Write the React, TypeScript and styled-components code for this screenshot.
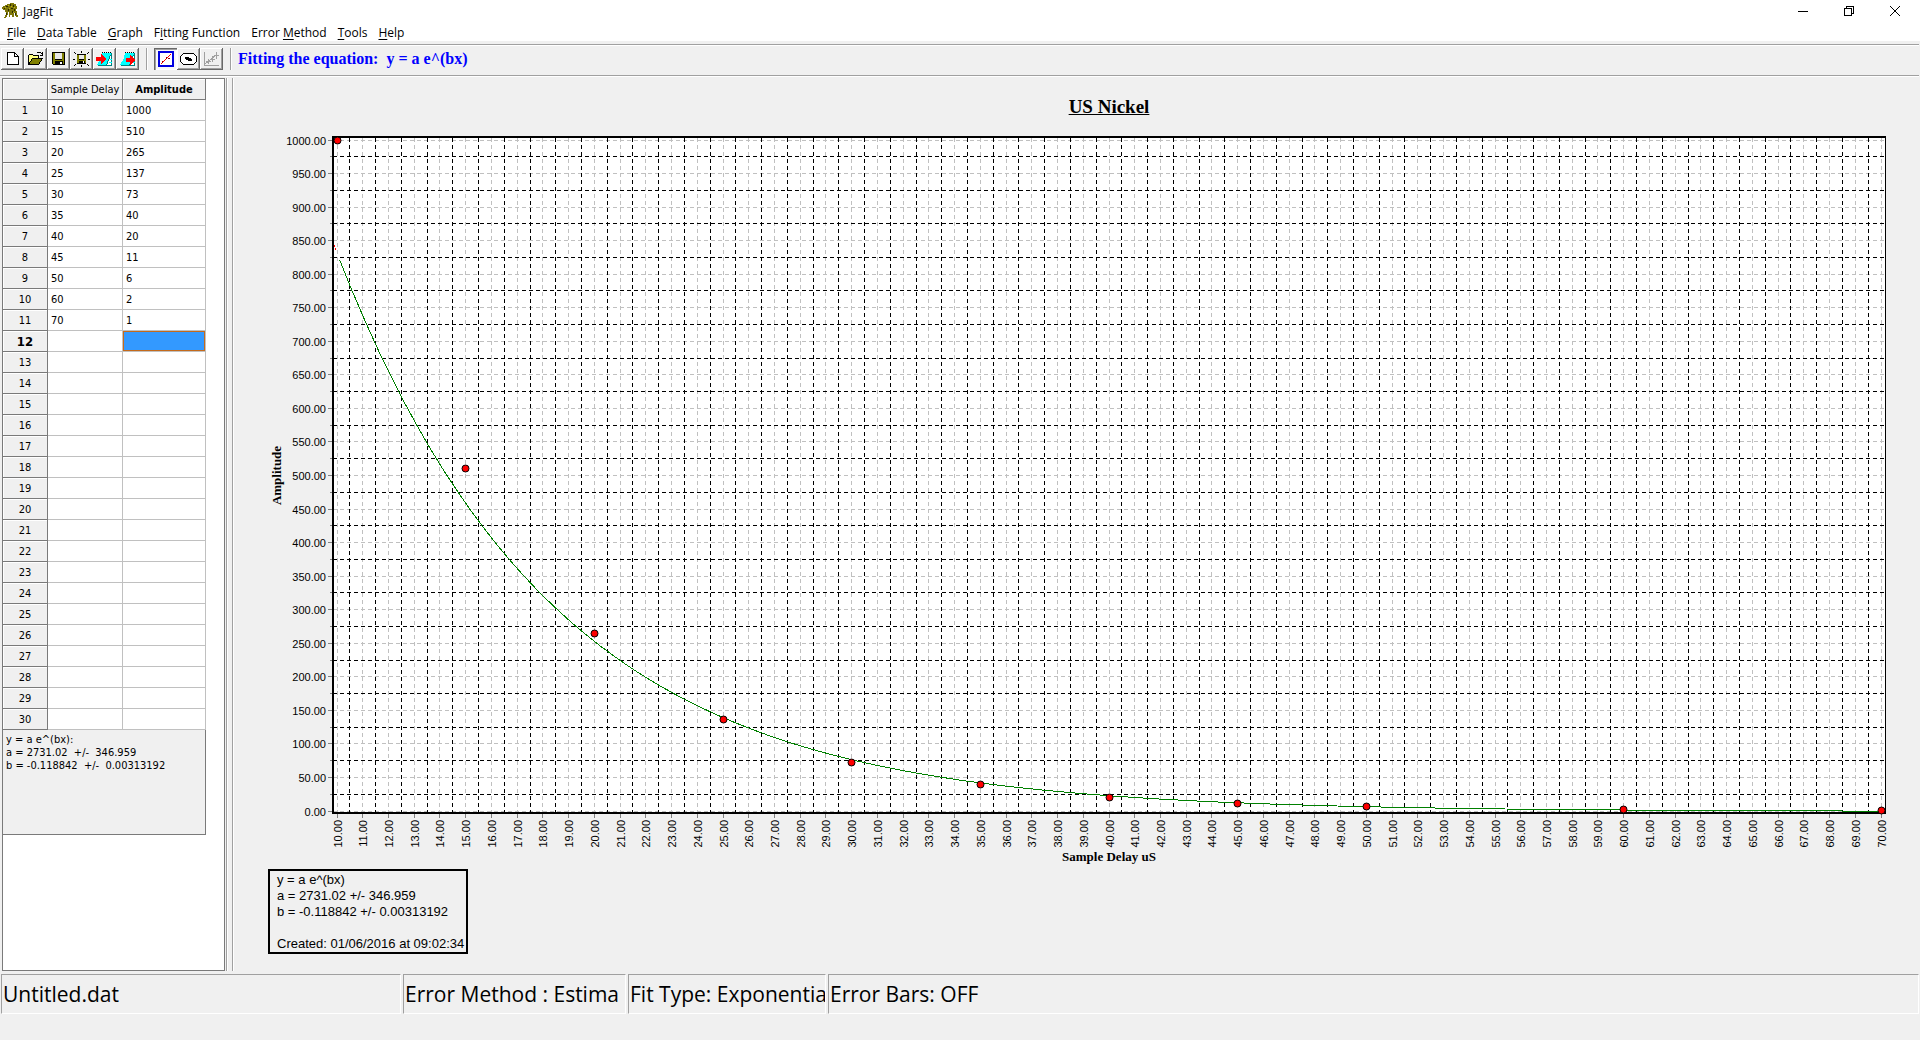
import React, { useLayoutEffect, useRef, useState } from "react";
import styled, { createGlobalStyle, css } from "styled-components";

const UI = `"Open Sans", "Noto Sans", sans-serif`;
const TABLE_FONT = `"DejaVu Sans Condensed", "DejaVu Sans", sans-serif`;
const ARIAL = `"Liberation Sans", Arial, sans-serif`;
const SERIF = `"Liberation Serif", "Times New Roman", serif`;

const Global = createGlobalStyle`
  * { box-sizing: border-box; }
  body { margin: 0; background: #f0f0f0; color: #000; }
  button { border: 0; margin: 0; padding: 0; background: none; color: inherit; font: inherit; }
`;

const Window = styled.div`
  display: flex;
  flex-direction: column;
  height: 100vh;
  padding-bottom: 26px;
  overflow: hidden;
  font-family: ${UI};
  background: #f0f0f0;
`;

const TitleBar = styled.header`
  display: flex;
  align-items: center;
  height: 22px;
  padding: 0 2px;
  background: #fff;
  font-size: 12px;
`;

const AppName = styled.span`
  flex: 1;
  line-height: 22px;
  padding: 2px 0 0 5px;
`;

const WindowButton = styled.button`
  display: grid;
  place-items: center;
  width: 46px;
  height: 20px;
`;

const MenuBar = styled.nav`
  display: flex;
  gap: 11px;
  height: 19px;
  padding-left: 7px;
  background: #fff;
  font-size: 12px;
`;

const MenuItem = styled.button`
  line-height: 22px;
  white-space: nowrap;
  u { text-underline-offset: 2px; }
`;

const ToolBar = styled.div`
  display: flex;
  align-items: center;
  height: 36px;
  margin-right: 1px;
  padding: 0 0 3px 1px;
  border-top: 3px solid #f0f0f0;
  box-shadow: inset 0 1px #a0a0a0, inset 0 2px #fff, inset 0 -1px #fff, inset 0 -2px #a0a0a0;
`;

const ToolButton = styled.button<{ $pressed?: boolean }>`
  display: grid;
  place-items: center;
  width: 23px;
  height: 22px;
  ${(p) =>
    p.$pressed
      ? css`
          background: #f8f8f8;
          box-shadow: inset 1px 1px #696969, inset 2px 2px #a0a0a0, inset -1px -1px #fff;
        `
      : css`
          box-shadow: inset -1px -1px #696969, inset 1px 1px #fff, inset -2px -2px #a0a0a0;
        `}
`;

const Separator = styled.span`
  width: 2px;
  height: 22px;
  margin: 0 6px 0 7px;
  border-left: 1px solid #a0a0a0;
  border-right: 1px solid #fff;
`;

const Equation = styled.p`
  margin: 0;
  font: bold 16px/22px ${SERIF};
  color: #00f;
  white-space: pre;
`;

const Body = styled.main`
  display: flex;
  flex: 1;
  min-height: 0;
  padding: 1px 0 3px 2px;
`;

const SidePanel = styled.aside`
  width: 223px;
  background: #fff;
  border: 1px solid #7a7a7a;
  overflow: hidden;
`;

const Splitter = styled.div`
  width: 8px;
  margin: 0 1px;
  border-left: 1px solid #a0a0a0;
  border-right: 1px solid #fff;
  box-shadow: inset 1px 0 #fff, inset -1px 0 #a0a0a0;
`;

const DataTable = styled.table`
  width: 203px;
  table-layout: fixed;
  border-collapse: separate;
  border-spacing: 0;
  font: 11px/18px ${TABLE_FONT};
`;

const Head = styled.th<{ $active?: boolean; $w: number }>`
  width: ${(p) => p.$w}px;
  height: 21px;
  padding: 2px 0 0;
  background: #f0f0f0;
  border-right: 1px solid #7a7a7a;
  border-bottom: 1px solid #7a7a7a;
  box-shadow: inset 1px 1px #fff;
  font-weight: ${(p) => (p.$active ? "bold" : "normal")};
  white-space: nowrap;
`;

const RowHead = styled(Head)`
  font-size: ${(p) => (p.$active ? 13 : 11)}px;
`;

const Cell = styled.td<{ $selected?: boolean }>`
  height: 21px;
  padding: 2px 0 0 3px;
  border-right: 1px solid #c0c0c0;
  border-bottom: 1px solid #c0c0c0;
  ${(p) =>
    p.$selected &&
    css`
      background: #3399ff;
      box-shadow: inset 0 0 0 1px #c46a1c;
    `}
`;

const FitResult = styled.section`
  width: 203px;
  height: 105px;
  padding: 3px;
  background: #f0f0f0;
  border-right: 1px solid #7a7a7a;
  border-bottom: 1px solid #7a7a7a;
  font: 11px/13px ${TABLE_FONT};
  white-space: pre;
`;

const GraphPane = styled.section`
  display: flex;
  flex: 1;
  flex-direction: column;
  min-width: 0;
  padding: 17px 34px 17px 33px;
`;

const GraphTitle = styled.h1`
  margin: 0 0 17px;
  padding-left: 64px;
  font: bold 19px/24px ${SERIF};
  text-align: center;
  text-decoration: underline;
`;

const PlotBox = styled.div`
  flex: 1;
  min-height: 0;
  svg { display: block; overflow: visible; }
`;

const Legend = styled.div`
  align-self: flex-start;
  padding: 1px 2px 0 7px;
  border: 2px solid #000;
  font: 13px/16px ${ARIAL};
  white-space: pre;
`;

const StatusBar = styled.footer`
  display: flex;
  gap: 2px;
  height: 40px;
  padding: 0 1px;
`;

const StatusCell = styled.div<{ $w?: number }>`
  flex: ${(p) => (p.$w ? `0 0 ${p.$w}px` : "1")};
  padding-left: 1px;
  overflow: hidden;
  border: 1px solid;
  border-color: #a0a0a0 #fff #fff #a0a0a0;
  font-size: 21px;
  line-height: 38px;
  white-space: nowrap;
`;

const DATA: [number, number][] = [
  [10, 1000], [15, 510], [20, 265], [25, 137], [30, 73], [35, 40],
  [40, 20], [45, 11], [50, 6], [60, 2], [70, 1],
];
const ROWS = 30;
const ACTIVE_ROW = 12;
const A = 2731.02;
const B = -0.118842;

function Plot() {
  const box = useRef<HTMLDivElement>(null);
  const [size, setSize] = useState({ w: 0, h: 0 });

  useLayoutEffect(() => {
    const measure = () => {
      if (box.current) setSize({ w: box.current.clientWidth, h: box.current.clientHeight });
    };
    measure();
    window.addEventListener("resize", measure);
    return () => window.removeEventListener("resize", measure);
  }, []);

  const left = 65;
  const right = size.w - 1;
  const top = 2;
  const bottom = size.h - 56;
  const rawX = (v: number) => left + 4 + ((v - 10) / 60) * (right - left - 8);
  const rawY = (v: number) => bottom - 2 - (v / 1000) * (bottom - top - 4);
  const x = (v: number) => Math.floor(rawX(v)) + 0.5;
  const y = (v: number) => Math.floor(rawY(v)) + 0.5;
  const xs = Array.from({ length: 61 }, (_, i) => 10 + i);
  const ys = Array.from({ length: 21 }, (_, i) => i * 50);
  const curve = Array.from({ length: 120 }, (_, i) => 10.1 + (i * 59.9) / 119)
    .map((v) => `${rawX(v).toFixed(1)},${(rawY(A * Math.exp(B * v)) + 0.5).toFixed(1)}`)
    .join(" ");

  return (
    <PlotBox ref={box}>
      {size.w > 0 && (
        <svg width={size.w} height={size.h} role="img" aria-label="Amplitude against sample delay">
          <rect x={left} y={top} width={right - left} height={bottom - top} fill="#fff" />
          <g shapeRendering="crispEdges" fill="none">
            <g stroke="#c0c0c0" strokeDasharray="4 3">
              {xs.map((v) => <line key={v} x1={x(v)} x2={x(v)} y1={top} y2={bottom} />)}
              {ys.map((v) => <line key={v} x1={left} x2={right} y1={y(v)} y2={y(v)} />)}
            </g>
            <g stroke="#000" strokeDasharray="4 3">
              {xs.slice(1).map((v) => <line key={v} x1={x(v - 0.5)} x2={x(v - 0.5)} y1={top} y2={bottom} />)}
              {ys.slice(1).map((v) => <line key={v} x1={left} x2={right} y1={y(v - 25)} y2={y(v - 25)} />)}
            </g>
            <g stroke="#808080">
              {xs.map((v) => <line key={v} x1={x(v)} x2={x(v)} y1={bottom + 1} y2={bottom + 5} />)}
              {ys.map((v) => <line key={v} x1={left - 5} x2={left - 1} y1={y(v)} y2={y(v)} />)}
              {ys.slice(1).map((v) => <line key={v} x1={left - 3} x2={left - 1} y1={y(v - 25)} y2={y(v - 25)} />)}
            </g>
            <path d={`M${left} ${top - 1}V${bottom}H${right + 1}`} stroke="#000" strokeWidth="2" />
            <path d={`M${left - 1} ${top - 1}H${right + 1}`} stroke="#000" strokeWidth="2" />
            <path d={`M${right + 0.5} ${top}V${bottom}`} stroke="#000" />
            <polyline points={curve} stroke="#008000" />
            <path d={`M${left + 1} ${y(843)}l2 4`} stroke="#f00" strokeDasharray="2 1" />
          </g>
          {DATA.map(([px, py]) => (
            <circle key={px} cx={x(px)} cy={y(py)} r="3.5" fill="#f00" stroke="#000" />
          ))}
          <g fontFamily={ARIAL} fontSize="11">
            {ys.map((v) => (
              <text key={v} x={left - 7} y={y(v) + 4} textAnchor="end">{v.toFixed(2)}</text>
            ))}
            {xs.map((v) => (
              <text key={v} transform={`translate(${x(v) + 4} ${bottom + 7}) rotate(-90)`} textAnchor="end">
                {v.toFixed(2)}
              </text>
            ))}
          </g>
          <g fontFamily={SERIF} fontSize="13" fontWeight="bold" textAnchor="middle">
            <text transform={`translate(13 ${(top + bottom) / 2}) rotate(-90)`}>Amplitude</text>
            <text x={(left + right) / 2} y={bottom + 48}>Sample Delay uS</text>
          </g>
        </svg>
      )}
    </PlotBox>
  );
}

const Icon = ({ children }: { children: React.ReactNode }) => (
  <svg width="17" height="16" viewBox="0 0 17 16" fill="none" shapeRendering="crispEdges" aria-hidden="true">
    {children}
  </svg>
);

const Floppy = () => (
  <>
    <path d="M2 1h13v13H3l-1-1z" fill="#000" />
    <path d="M3 2h2v7h7V2h2v11H3z" fill="#808000" />
    <path d="M5 2h7v6H5z" fill="#e8e8e8" />
    <path d="M5 10h8v4H5z" fill="#000" />
    <path d="M10 11h2v2h-2z" fill="#fff" />
  </>
);

const Notebook = ({ arrow }: { arrow: string }) => (
  <>
    <path d="M6 2h9l-1 5-3 7H1l4-7z" fill="#00ffff" />
    <path d="M15 3h1v11h-5l3-6z" fill="#fff" />
    <path d="M6 1h1v1H6zM8 1h1v1H8zM10 1h1v1h-1zM12 1h1v1h-1zM14 1h1v1h-1z" fill="#000" />
    <path d="M15.500 2v12M14.500 4l-4 10M2 14.500h14" stroke="#008080" />
    <path d="M14 8h2v1h-2zM13 11h3v1h-3z" fill="#00ffff" />
    <path d={arrow} fill="#f00" />
  </>
);

const NewIcon = () => (
  <Icon>
    <path d="M3.500 1.500h7l4 4v8h-11z" fill="#fff" stroke="#000" />
    <path d="M10.500 1.500v4h4" stroke="#000" />
  </Icon>
);
const OpenIcon = () => (
  <Icon>
    <path d="M1.500 13.500v-9l1-1h3l1 1h5v3" fill="#ffff80" stroke="#000" />
    <path d="M1.500 13.500l4-6h10l-4 6z" fill="#808000" stroke="#000" />
    <path d="M9.500 2.500l1-1h3l2 2M15.500 1v3h-3" stroke="#000" />
  </Icon>
);
const SaveIcon = () => <Icon><Floppy /></Icon>;
const SaveAsIcon = () => (
  <Icon>
    <g transform="translate(2 2) scale(.76)"><Floppy /></g>
    <path d="M8 0h1v2H8zM1 1h1v1H1zM2 2h1v1H2zM15 1h1v1h-1zM14 2h1v1h-1zM0 8h2v1H0zM15 8h2v1h-2zM1 14h1v1H1zM2 13h1v1H2zM15 14h1v1h-1zM14 13h1v1h-1zM8 14h1v2H8z" fill="#000" />
  </Icon>
);
const ImportIcon = () => <Icon><Notebook arrow="M0 6h5V3l5 5-5 5v-3H0z" /></Icon>;
const ExportIcon = () => <Icon><Notebook arrow="M7 7h4V4l5 5-5 5v-3H7z" /></Icon>;
const FitIcon = () => (
  <Icon>
    <rect x="2" y="1" width="14" height="14" fill="#fff" stroke="#0000e0" strokeWidth="2" />
    <path d="M4 13L14 3" stroke="#f00" />
    <path d="M5 10h1v2H5zM9 6h1v2H9zM11 7h2v1h-2z" fill="#a00000" />
  </Icon>
);
const EllipseIcon = () => (
  <Icon>
    <path d="M3.500 2.500h10l3 3v5l-3 3h-10l-3-3v-5z" fill="#fff" stroke="#000" />
    <path d="M5 6h4v1h2v1h1v2H8V9H6V8H5z" fill="#000" />
  </Icon>
);
const BarsIcon = () => (
  <Icon>
    <path d="M1.500 1v13.500H16M2 13L14 3M5.500 8v5M3 10.500h5M9.500 5v6M7 8.500h5M13.500 1v7M11 4.500h5" stroke="#a0a0a0" />
  </Icon>
);

const Leopard = () => (
  <svg width="16" height="16" viewBox="0 0 16 16" shapeRendering="crispEdges" aria-hidden="true">
    <path d="M3 2h2V1h3V0h4v1h2v2h1v3h-1v2h1v4h1v2h-2v-1h-1v-3h-1v4h-2v-2h-1V9H9v3H8v2H7V9H6v3H5v2H4v1H2v-1h1v-2h1V9H3V7H1V6H0V4h1V3h2z" fill="#7d7608" />
    <path d="M4 3h2v1H4zM8 1h1v2H8zM11 2h1v2h-1zM6 6h1v2H6zM9 5h2v1H9zM12 6h1v2h-1zM2 5h1v1H2zM4 10h1v2H4zM13 10h1v2h-1zM10 8h1v2h-1z" fill="#2b2900" />
    <path d="M3 4h1v1H3zM6 2h1v1H6zM9 3h1v1H9zM12 4h1v1h-1zM7 5h1v1H7zM11 9h1v1h-1z" fill="#c0b520" />
  </svg>
);

const MENUS: [string, string, string][] = [
  ["", "F", "ile"], ["", "D", "ata Table"], ["", "G", "raph"], ["F", "i", "tting Function"],
  ["Error ", "M", "ethod"], ["", "T", "ools"], ["", "H", "elp"],
];

const FILE_TOOLS: [string, () => React.ReactElement][] = [
  ["New", NewIcon], ["Open", OpenIcon], ["Save", SaveIcon],
  ["Save as", SaveAsIcon], ["Import", ImportIcon], ["Export", ExportIcon],
];

export default function App() {
  return (
    <Window>
      <Global />
      <TitleBar>
        <Leopard />
        <AppName>JagFit</AppName>
        <WindowButton aria-label="Minimize">
          <svg width="10" height="10" shapeRendering="crispEdges"><path d="M0 5.500h10" stroke="#000" /></svg>
        </WindowButton>
        <WindowButton aria-label="Restore">
          <svg width="10" height="10" shapeRendering="crispEdges" fill="none" stroke="#000">
            <path d="M.5 2.500h7v7h-7zM2.500 2V.5h7v7H8" />
          </svg>
        </WindowButton>
        <WindowButton aria-label="Close">
          <svg width="10" height="10"><path d="M0 0l10 10M10 0L0 10" stroke="#000" /></svg>
        </WindowButton>
      </TitleBar>
      <MenuBar>
        {MENUS.map(([before, key, after]) => (
          <MenuItem key={before + key + after}>{before}<u>{key}</u>{after}</MenuItem>
        ))}
      </MenuBar>
      <ToolBar>
        {FILE_TOOLS.map(([label, Glyph]) => (
          <ToolButton key={label} aria-label={label}><Glyph /></ToolButton>
        ))}
        <Separator />
        <ToolButton aria-label="Show fit" aria-pressed="true" $pressed><FitIcon /></ToolButton>
        <ToolButton aria-label="Show points"><EllipseIcon /></ToolButton>
        <ToolButton aria-label="Error bars" disabled><BarsIcon /></ToolButton>
        <Separator />
        <Equation>{"Fitting the equation:  y = a e^(bx)"}</Equation>
      </ToolBar>
      <Body>
        <SidePanel>
          <DataTable>
            <thead>
              <tr>
                <Head $w={45} aria-label="Row" />
                <Head $w={75} scope="col">Sample Delay</Head>
                <Head $w={83} scope="col" $active>Amplitude</Head>
              </tr>
            </thead>
            <tbody>
              {Array.from({ length: ROWS }, (_, i) => (
                <tr key={i}>
                  <RowHead $w={45} scope="row" $active={i + 1 === ACTIVE_ROW}>{i + 1}</RowHead>
                  <Cell>{DATA[i]?.[0]}</Cell>
                  <Cell $selected={i + 1 === ACTIVE_ROW}>{DATA[i]?.[1]}</Cell>
                </tr>
              ))}
            </tbody>
          </DataTable>
          <FitResult>{"y = a e^(bx):\na = 2731.02  +/-  346.959\nb = -0.118842  +/-  0.00313192"}</FitResult>
        </SidePanel>
        <Splitter />
        <GraphPane>
          <GraphTitle>US Nickel</GraphTitle>
          <Plot />
          <Legend>{"y = a e^(bx)\na = 2731.02 +/- 346.959\nb = -0.118842 +/- 0.00313192\n\nCreated: 01/06/2016 at 09:02:34"}</Legend>
        </GraphPane>
      </Body>
      <StatusBar>
        <StatusCell $w={400}>Untitled.dat</StatusCell>
        <StatusCell $w={223}>Error Method : Estima</StatusCell>
        <StatusCell $w={198}>Fit Type: Exponentia</StatusCell>
        <StatusCell>Error Bars: OFF</StatusCell>
      </StatusBar>
    </Window>
  );
}
